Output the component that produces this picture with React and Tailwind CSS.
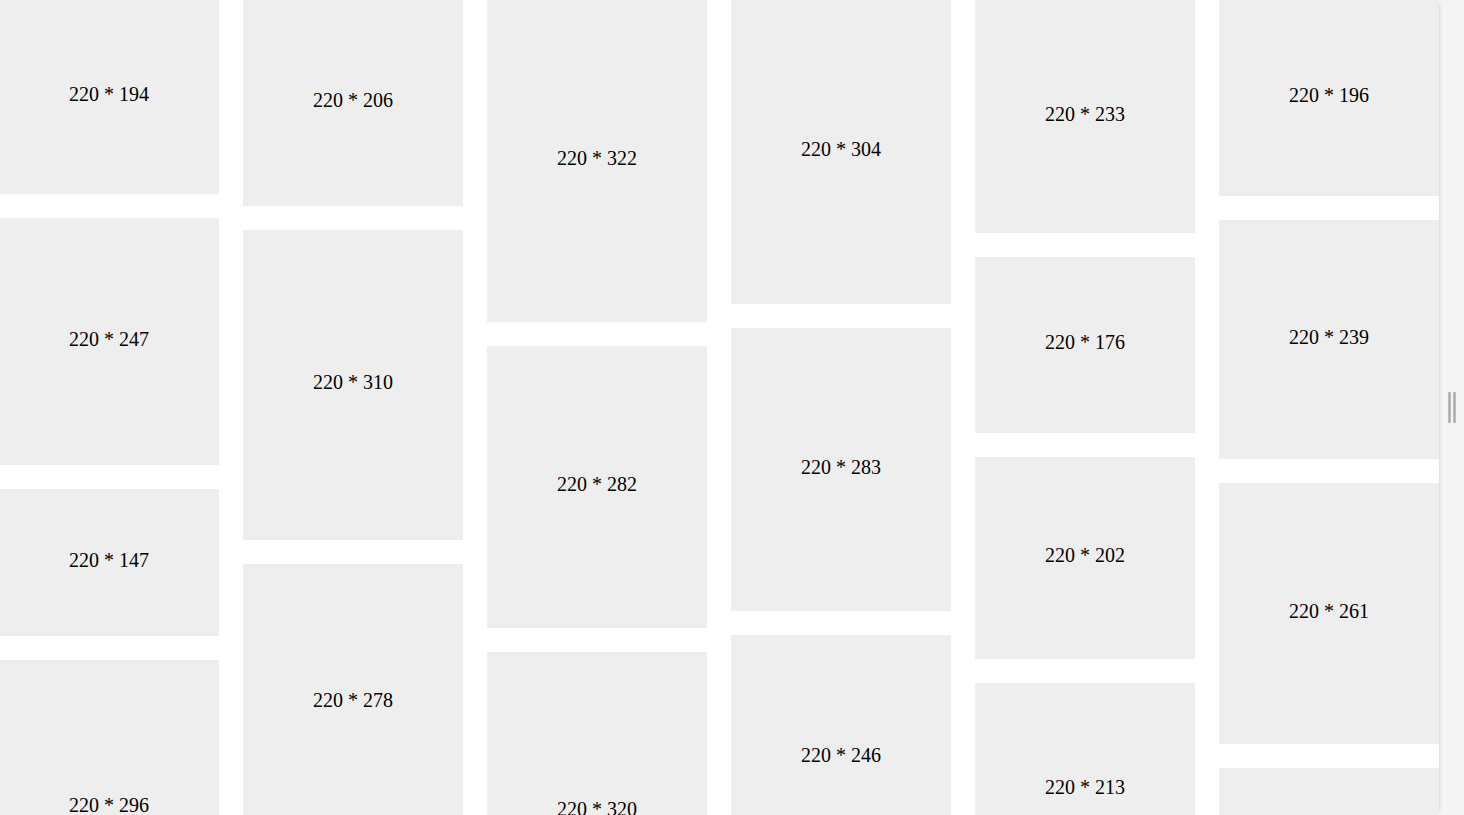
import React from "react";

// item heights per column, as laid out in the waterfall
const COLUMNS = [
  [194, 247, 147, 296],
  [206, 310, 278],
  [322, 282, 320],
  [304, 283, 246],
  [233, 176, 202, 213],
  [196, 239, 261, 288],
];

function Tile({ h }) {
  return (
    <div
      className="w-[220px] shrink-0 bg-[#eeeeee] flex items-center justify-center pb-[6px] text-[20px] leading-none text-black"
      style={{ height: h }}
    >
      220 * {h}
    </div>
  );
}

export default function App() {
  return (
    <div
      className="flex h-[815px] w-full overflow-hidden bg-[#f4f4f4]"
      style={{ fontFamily: '"Liberation Serif", "Times New Roman", serif' }}
    >
      {/* Waterfall area */}
      <div className="w-[1440px] shrink-0 h-full overflow-hidden bg-white rounded-r-lg border-r border-[#e2e2e2] shadow-[1px_0_3px_rgba(0,0,0,0.06)]">
        <div className="flex gap-6 -ml-px">
          {COLUMNS.map((col, i) => (
            <div key={i} className="flex flex-col gap-6">
              {col.map((h, j) => (
                <Tile key={j} h={h} />
              ))}
            </div>
          ))}
        </div>
      </div>

      {/* Resize handle */}
      <div className="flex-1 flex items-center justify-center">
        <div className="flex gap-[2px]">
          <span className="block w-[3px] h-[31px] bg-[#a9a9a9] border border-[#bdbdbd]" />
          <span className="block w-[3px] h-[31px] bg-[#a9a9a9] border border-[#bdbdbd]" />
        </div>
      </div>
    </div>
  );
}
